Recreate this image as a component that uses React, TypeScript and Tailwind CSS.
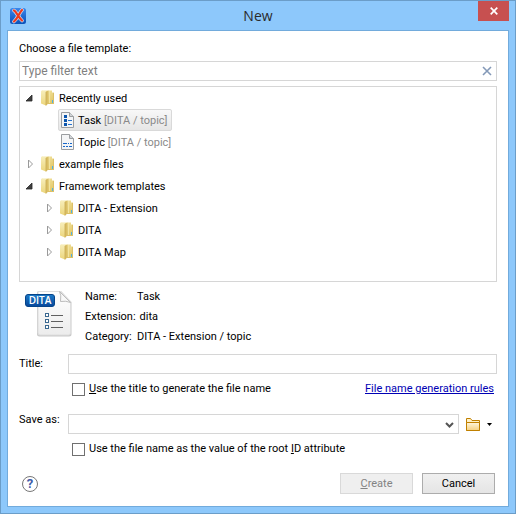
import type { ReactNode } from "react";

type IconKind = "folder" | "task" | "topic";

type Node = {
  label: string;
  path?: string;
  level: 0 | 1;
  icon: IconKind;
  state: "open" | "closed" | "leaf";
  selected?: boolean;
};

const nodes: Node[] = [
  { label: "Recently used", level: 0, icon: "folder", state: "open" },
  { label: "Task", path: "[DITA / topic]", level: 1, icon: "task", state: "leaf", selected: true },
  { label: "Topic", path: "[DITA / topic]", level: 1, icon: "topic", state: "leaf" },
  { label: "example files", level: 0, icon: "folder", state: "closed" },
  { label: "Framework templates", level: 0, icon: "folder", state: "open" },
  { label: "DITA - Extension", level: 1, icon: "folder", state: "closed" },
  { label: "DITA", level: 1, icon: "folder", state: "closed" },
  { label: "DITA Map", level: 1, icon: "folder", state: "closed" },
];

function AppLogo() {
  return (
    <svg width="16" height="16" viewBox="0 0 16 16" aria-hidden="true">
      <defs>
        <linearGradient id="logo" x1="0" y1="0" x2="0" y2="1">
          <stop offset="0" stopColor="#3b86ea" />
          <stop offset="1" stopColor="#0a51b8" />
        </linearGradient>
      </defs>
      <rect width="16" height="16" rx="2.5" fill="url(#logo)" />
      <path d="M4 2.500C6.500 3.500 7.500 8.500 12 12.500M12 2C9 5 8 10 4 13.500" fill="none" stroke="#c6d8f2" strokeWidth="3.600" strokeLinecap="round" />
      <path d="M4 2.500C6.500 3.500 7.500 8.500 12 12.500M12 2C9 5 8 10 4 13.500" fill="none" stroke="#ee3a1c" strokeWidth="2.200" strokeLinecap="round" />
    </svg>
  );
}

function FolderIcon() {
  return (
    <svg width="14" height="16" viewBox="0 0 14 16" aria-hidden="true">
      <defs>
        <linearGradient id="fold" x1="0" y1="0" x2="1" y2="1">
          <stop offset="0" stopColor="#f8edb4" />
          <stop offset="1" stopColor="#dfc25c" />
        </linearGradient>
        <linearGradient id="flap" x1="0" y1="0" x2="0" y2="1">
          <stop offset="0" stopColor="#f7eebb" />
          <stop offset="1" stopColor="#ecd67c" />
        </linearGradient>
      </defs>
      <path d="M1 0.500H11V2.500H13V14H1Z" fill="url(#fold)" />
      <path d="M0 1.500Q0 0.500 1 0.500L5 1.500V15.500L0 13.500Z" fill="url(#flap)" />
      <path d="M5 1.500L7.500 0.500V13.500L5 15.500Z" fill="#dabf66" />
      <path d="M5 2V15.500" stroke="#c8aa50" strokeWidth="0.800" />
      <path d="M8 1H9V14H8Z" fill="#f3e4a0" />
      <path d="M12.500 3V13.500H7" fill="none" stroke="#dcc068" />
      <path d="M11.500 10V13" stroke="#4fb2e2" />
    </svg>
  );
}

function DocIcon({ kind }: { kind: "task" | "topic" }) {
  return (
    <svg width="14" height="16" viewBox="0 0 14 16" aria-hidden="true">
      <path d="M1.500 0.500H9.500L13.500 4.500V15.500H1.500Z" fill="#f4f5f6" stroke="#9a9da0" />
      <path d="M9.500 0.500V4.500H13.500" fill="#d2d5d8" stroke="#9a9da0" />
      {kind === "task" ? (
        <g shapeRendering="crispEdges">
          <path d="M4 3H7V6H4ZM4 7H7V10H4ZM4 11H7V14H4Z" fill="#0b55ad" />
          <path d="M8 8.500H12M8 12.500H12" stroke="#2472ce" />
        </g>
      ) : (
        <path d="M3 9.500H7M8 9.500H9M10 9.500H12M3 12.500H5M6 12.500H8M9 12.500H12" stroke="#1767c9" shapeRendering="crispEdges" />
      )}
    </svg>
  );
}

function Twisty({ state }: { state: Node["state"] }) {
  return (
    <svg width="8" height="10" viewBox="0 0 8 10" aria-hidden="true">
      {state === "open" && <path d="M7 2V8H1Z" fill="#404040" stroke="#262626" strokeWidth="0.8" />}
      {state === "closed" && <path d="M3.500 1V9L7.500 5Z" fill="#fff" stroke="#9a9a9a" />}
    </svg>
  );
}

function TemplateImage() {
  return (
    <svg width="48" height="48" viewBox="0 0 48 48" className="shrink-0" role="img" aria-label="DITA task template">
      <defs>
        <linearGradient id="page" x1="0" y1="0" x2="0" y2="1">
          <stop offset="0" stopColor="#ffffff" />
          <stop offset="1" stopColor="#ececec" />
        </linearGradient>
        <linearGradient id="badge" x1="0" y1="0" x2="0" y2="1">
          <stop offset="0" stopColor="#1c7ac8" />
          <stop offset="1" stopColor="#07479a" />
        </linearGradient>
      </defs>
      <path d="M14 1H36L46.500 12V44Q46.500 46.500 44 46.500H14.500Q12 46.500 12 44V3Q12 1 14 1Z" fill="#c9c9c9" />
      <path d="M14 1.500H35.500L45.500 12V43Q45.500 45 43.500 45H15Q13 45 13 43V2.500Q13 1.500 14 1.500Z" fill="url(#page)" stroke="#dedede" />
      <path d="M34.500 1.500Q36.500 5 35.500 11.500Q41 10.500 45.500 12.500Z" fill="#f8f8f8" stroke="#bcbcbc" strokeLinejoin="round" />
      <g fill="#fff" stroke="#39678f" shapeRendering="crispEdges">
        <path d="M20.500 23.500H23.500V26.500H20.500ZM20.500 29.500H23.500V32.500H20.500ZM20.500 35.500H23.500V38.500H20.500Z" />
        <path d="M26 25.500H38M26 31.500H38M26 37.500H38" stroke="#606060" />
      </g>
      <rect x="0.500" y="4.500" width="29" height="12" rx="2.500" fill="url(#badge)" stroke="#064489" />
      <text x="15" y="14" textAnchor="middle" fill="#fff" fontSize="10" fontWeight="600" fontFamily="Open Sans, sans-serif">DITA</text>
    </svg>
  );
}

function TreeRow({ node }: { node: Node }) {
  return (
    <li
      role="treeitem"
      aria-level={node.level + 1}
      aria-selected={!!node.selected}
      aria-expanded={node.state === "leaf" ? undefined : node.state === "open"}
      className={`flex h-[22px] items-center gap-1.5 ${node.level === 1 ? "pl-6" : "pl-[5px]"}`}
    >
      <Twisty state={node.state} />
      <span
        className={`flex h-[22px] items-center gap-1 rounded-xs border px-px ${
          node.selected ? "border-[#d9d9d9] bg-linear-to-b from-[#f8f8f8] to-[#e6e6e6] pr-[3px]" : "border-transparent"
        }`}
      >
        {node.icon === "folder" ? <FolderIcon /> : <DocIcon kind={node.icon} />}
        <span className="pt-0.5">
          {node.label}
          {node.path && <span className="text-[#8a8a8a]"> {node.path}</span>}
        </span>
      </span>
    </li>
  );
}

function Detail({ name, children }: { name: string; children: ReactNode }) {
  return (
    <div className="flex h-5 items-center">
      <dt className="min-w-[52px] pr-1">{name}</dt>
      <dd>{children}</dd>
    </div>
  );
}

const box = "border border-[#d6d6d6] bg-white outline-none";
const check = "size-[13px] shrink-0 appearance-none border border-[#707070] bg-white checked:bg-[#3b78c4]";

export default function App() {
  return (
    <div className="flex min-h-screen flex-col border border-[#6b9dc8] bg-[#8dc8fb] px-1.5 pb-1.5 font-['Roboto',sans-serif] text-[11px] leading-[18px] text-black">
      <header className="grid h-[29px] grid-cols-[1fr_auto_1fr] items-center">
        <div className="pl-[3px]">
          <AppLogo />
        </div>
        <h1 className="font-['Open_Sans',sans-serif] text-[14px] text-[#2a2a2a]">New</h1>
        <button aria-label="Close" className="flex h-5 w-[31px] items-center justify-center self-start justify-self-end bg-[#c75050]">
          <svg width="8" height="8" viewBox="0 0 8 8" aria-hidden="true">
            <path d="M0.700 0.700L7.300 7.300M7.300 0.700L0.700 7.300" stroke="#fff" strokeWidth="1.700" />
          </svg>
        </button>
      </header>

      <main className="flex grow flex-col border border-[#72abdc] bg-white px-[11px] pt-[9px] pb-3">
        <label htmlFor="filter">Choose a file template:</label>
        <div className={`mt-[3px] flex h-5 items-center pr-[3px] ${box}`}>
          <input id="filter" placeholder="Type filter text" className="h-full min-w-0 grow px-0.5 text-[12px] outline-none placeholder:text-[#808080]" />
          <button aria-label="Clear filter" className="px-px">
            <svg width="10" height="10" viewBox="0 0 10 10" aria-hidden="true">
              <path d="M1 1L9 9M9 1L1 9" stroke="#8499b8" strokeWidth="1.600" />
            </svg>
          </button>
        </div>

        <ul role="tree" aria-label="File templates" className={`mt-[5px] min-h-[196px] grow ${box}`}>
          {nodes.map((node) => (
            <TreeRow key={node.label} node={node} />
          ))}
        </ul>

        <section className="mt-[5px] flex gap-3 pl-1.5">
          <div className="pt-[3px]">
            <TemplateImage />
          </div>
          <dl>
            <Detail name="Name:">Task</Detail>
            <Detail name="Extension:">dita</Detail>
            <Detail name="Category:">DITA - Extension / topic</Detail>
          </dl>
        </section>

        <div className="mt-[7px] flex items-center">
          <label htmlFor="title" className="w-[49px] shrink-0">Title:</label>
          <input id="title" className={`h-5 min-w-0 grow px-1 ${box}`} />
        </div>
        <div className="mt-[6px] flex items-center justify-between pr-[3px] pl-[53px]">
          <label className="flex items-center gap-1">
            <input type="checkbox" className={check} />
            <span><u>U</u>se the title to generate the file name</span>
          </label>
          <a href="#rules" className="text-[#0000b4] underline">File name generation rules</a>
        </div>

        <div className="mt-[13px] flex items-center">
          <label htmlFor="save" className="w-[49px] shrink-0 pb-2">Save as:</label>
          <div className="relative min-w-0 grow">
            <select id="save" className={`block h-5 w-full appearance-none px-1 ${box}`}>
              <option></option>
            </select>
            <svg className="pointer-events-none absolute top-2 right-[5px]" width="9" height="7" viewBox="0 0 9 7" aria-hidden="true">
              <path d="M1 1L4.500 4.500L8 1" fill="none" stroke="#555" strokeWidth="2" />
            </svg>
          </div>
          <button aria-label="Browse" className="ml-[7px] flex w-[31px] items-center gap-1.5">
            <svg width="15" height="13" viewBox="0 0 15 13" className="shrink-0" aria-hidden="true">
              <defs>
                <linearGradient id="browse" x1="0" y1="0" x2="0" y2="1">
                  <stop offset="0" stopColor="#fff6dc" />
                  <stop offset="1" stopColor="#f5d080" />
                </linearGradient>
              </defs>
              <path d="M0.500 12.500V0.500H4.500L6 2.500H13.500V12.500Z" fill="#fff1c8" stroke="#c08000" />
              <path d="M0.500 12.500V4.500H13.500V12.500Z" fill="url(#browse)" stroke="#c08000" />
            </svg>
            <svg width="5" height="3" viewBox="0 0 5 3" className="shrink-0" aria-hidden="true">
              <path d="M0 0H5L2.500 3Z" fill="#000" />
            </svg>
          </button>
        </div>
        <label className="mt-[3px] ml-[53px] flex items-center gap-1">
          <input type="checkbox" className={check} />
          <span>Use the file name as the value of the root <u>I</u>D attribute</span>
        </label>

        <footer className="mt-[15px] flex items-center gap-[9px] pr-0.5 pl-[3px]">
          <button aria-label="Help" className="mr-auto flex size-4 items-center justify-center rounded-full border border-[#777] text-[13px] font-bold text-[#3f5ba9]">
            ?
          </button>
          <button disabled className="h-[21px] w-[73px] border border-[#d9d9d9] bg-[#efefef] leading-4 text-[#838383]"><u>C</u>reate</button>
          <button className="h-[21px] w-[73px] border border-[#acacac] bg-linear-to-b from-[#f0f0f0] to-[#e5e5e5] leading-4">Cancel</button>
        </footer>
      </main>
    </div>
  );
}
